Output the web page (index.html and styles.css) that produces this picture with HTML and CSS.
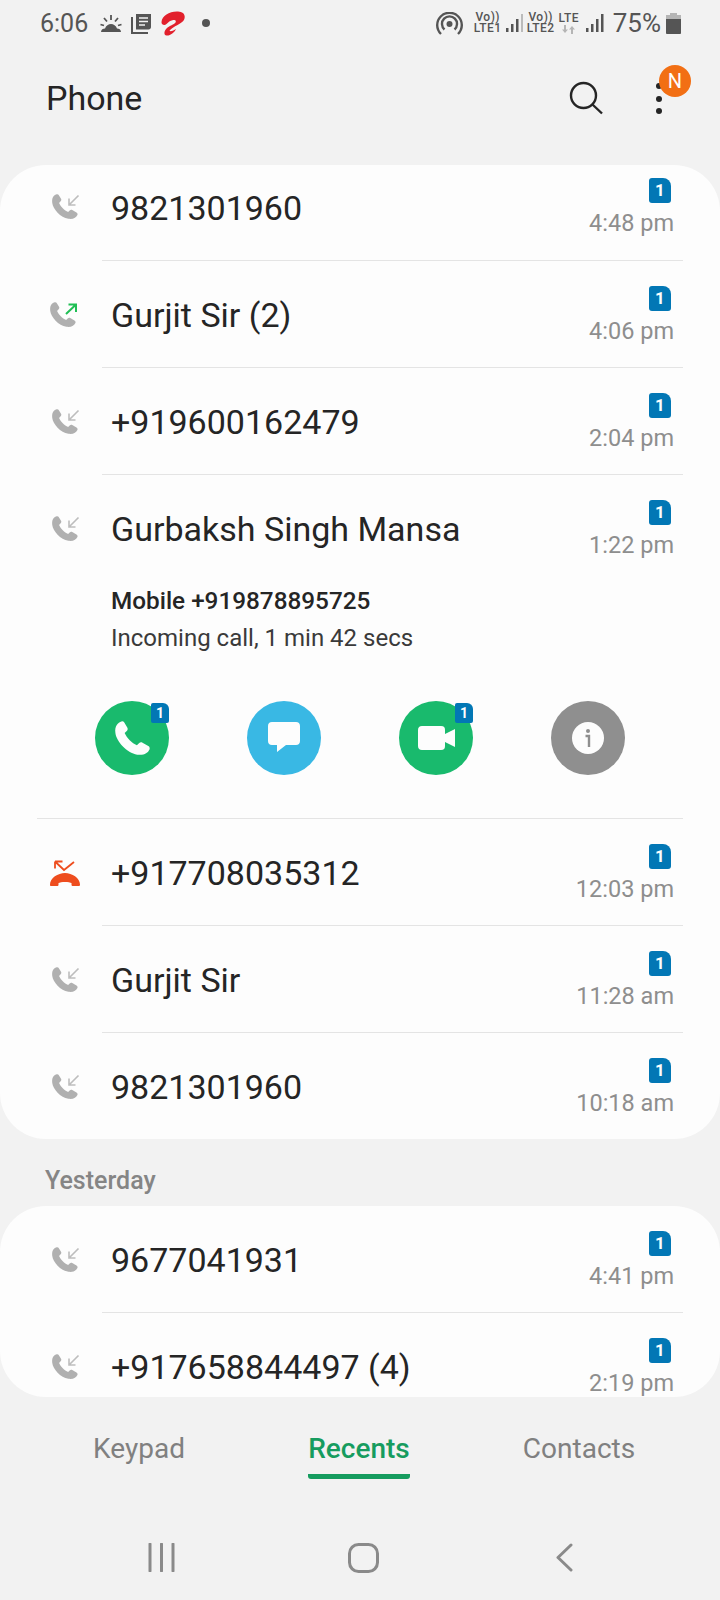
FILE: index.html
```html
<!DOCTYPE html>
<html lang="en">
<head>
  <meta charset="UTF-8" />
  <meta name="viewport" content="width=device-width, initial-scale=1.0"/>
  <title>Phone</title>
  <link rel="stylesheet" href="styles.css">
</head>
<body>
  <svg class="defs" width="0" height="0">
    <symbol id="handset" viewBox="0 0 24 24">
      <path d="M6 2.500C4 3 2 5 2.500 9C3 14 9 20.500 15 21.500C19 22 21 20.500 22 18.500C22.300 17.700 22 17 21.300 16.600L18 14.700C17.300 14.300 16.600 14.400 16 15L14.800 16.200C12 15 9 12 7.800 9.200L9 8C9.600 7.400 9.700 6.700 9.300 6L7.500 3C7.200 2.500 6.600 2.300 6 2.500Z"/>
    </symbol>
    <symbol id="call-in" viewBox="0 0 28 26">
      <use href="#handset" x="-3" y="-3" width="31" height="31" fill="#b0b0b0"/>
      <path d="M26.500 1.500L17 11M17 4.500V11H23.500" fill="none" stroke="#bdbdbd" stroke-width="1.600"/>
    </symbol>
    <symbol id="call-out" viewBox="0 0 28 26">
      <use href="#handset" x="-3" y="-3" width="31" height="31" fill="#b0b0b0"/>
      <path d="M16 12L26 2.500M18.500 2.500H26V10" fill="none" stroke="#20bf55" stroke-width="2"/>
    </symbol>
    <symbol id="call-missed" viewBox="0 0 30 26">
      <path d="M1 26H7C8 26 8.500 25.500 8.500 24.500V23C10.500 21.500 19.500 21.500 21.500 23V24.500C21.500 25.500 22 26 23 26H28.500C29.500 26 30 25.500 30 24.500C30 18 22 13 15 13C8 13 0 18 0 24.500C0 25.500 .3 26 1 26Z" fill="#ee4d1e"/>
      <path d="M5 1.500L14 10L24 2M5 1.500H12.500M5 1.500V8.500" fill="none" stroke="#ee4d1e" stroke-width="1.800"/>
    </symbol>
  </svg>

  <div class="phone">
    <div class="status-bar">
      <div class="status-left">
        <span class="clock">6:06</span>
        <svg class="st-weather" width="22" height="20" viewBox="0 0 22 20">
          <path d="M1 19C1 16.500 3 15.500 5 15.500C6 12.500 8.500 11 11 11C13.500 11 16 12.500 17 15.500C19 15.500 21 16.500 21 19Z" fill="#555"/>
          <path d="M11 2V7M4 5L7 8.500M18 5L15 8.500M0.500 11.500L4 12.500M21.500 11.500L18 12.500" stroke="#555" stroke-width="1.800" fill="none"/>
        </svg>
        <svg class="st-news" width="21" height="21" viewBox="0 0 21 21">
          <path d="M1 4V20H17" fill="none" stroke="#555" stroke-width="2"/>
          <path d="M5 1H20V14C20 15.500 19 16.500 17.500 16.500H5Z" fill="#555"/>
          <path d="M8 5H17M8 8.500H17M8 12H14" stroke="#f2f2f2" stroke-width="1.600"/>
        </svg>
        <svg class="st-airtel" width="24" height="25" viewBox="0 0 24 25">
          <path d="M.5 11C1 4.500 9 0 17 .5C22 .8 24.500 3.500 23.500 7.500C22.500 11.500 17 13.500 13 16C11 17.300 9 18.800 8.500 20C10.500 20.500 13 19.500 15 18C13.500 21.500 9 25 5.500 24.500C2.500 24 2.800 20 6 17C8.500 14.800 13 13.500 14.500 11.500C15.500 9.800 14 8.800 11.500 9.200C9 9.700 7.500 11 5.500 13C3.500 14.800 .3 13.800 .5 11Z" fill="#e2202c"/>
        </svg>
        <span class="st-dot"></span>
      </div>
      <div class="status-right">
        <svg class="st-hotspot" width="27" height="23" viewBox="0 0 27 23">
          <circle cx="13.500" cy="12" r="3" fill="#555"/>
          <path d="M8.500 17.500A7.500 7.500 0 1 1 18.500 17.500M5 22A12.300 12.300 0 1 1 22 22" fill="none" stroke="#555" stroke-width="2.400"/>
        </svg>
        <span class="volte"><span>Vo))</span><span>LTE1</span></span>
        <svg class="st-bars" width="18" height="20" viewBox="0 0 18 20">
          <path d="M1 15H3.500V19H1ZM6 11H8.500V19H6ZM11 6H13.500V19H11Z" fill="#555"/>
          <path d="M16 1H18V19H16Z" fill="#bbb"/>
        </svg>
        <span class="volte"><span>Vo))</span><span>LTE2</span></span>
        <span class="volte lte"><span>LTE</span>
          <svg width="15" height="9" viewBox="0 0 15 9"><path d="M1 4.500L4 8L7 4.500H5V0H3V4.500ZM8 4.500L11 1L14 4.500H12V9H10V4.500Z" fill="#b5b5b5"/></svg>
        </span>
        <svg class="st-bars" width="19" height="20" viewBox="0 0 19 20">
          <path d="M1 15H3.500V19H1ZM6 11H8.500V19H6ZM11 6H13.500V19H11ZM16 1H18.500V19H16Z" fill="#555"/>
        </svg>
        <span class="battery-pct">75%</span>
        <svg class="st-battery" width="15" height="21" viewBox="0 0 15 21">
          <path d="M4 0H11V2H15V6H0V2H4Z" fill="#b5b5b5"/>
          <path d="M0 6H15V20C15 20.500 14.500 21 14 21H1C.5 21 0 20.500 0 20Z" fill="#555"/>
        </svg>
      </div>
    </div>

    <header class="app-header">
      <h1>Phone</h1>
      <div class="header-actions">
        <svg width="34" height="34" viewBox="0 0 34 34">
          <circle cx="14.500" cy="14.500" r="12.500" fill="none" stroke="#252525" stroke-width="2.400"/>
          <path d="M23.500 23.500L33 32.500" stroke="#252525" stroke-width="2.400"/>
        </svg>
        <div class="more">
          <span></span><span></span><span></span>
          <b class="notif">N</b>
        </div>
      </div>
    </header>

    <section class="card">
      <div class="row first">
        <svg class="call-icon"><use href="#call-in"/></svg>
        <div class="row-body">
          <div class="name">9821301960</div>
          <div class="meta"><span class="sim">1</span><span class="time">4:48 pm</span></div>
        </div>
      </div>
      <div class="row">
        <svg class="call-icon out"><use href="#call-out"/></svg>
        <div class="row-body">
          <div class="name">Gurjit Sir (2)</div>
          <div class="meta"><span class="sim">1</span><span class="time">4:06 pm</span></div>
        </div>
      </div>
      <div class="row">
        <svg class="call-icon"><use href="#call-in"/></svg>
        <div class="row-body">
          <div class="name">+919600162479</div>
          <div class="meta"><span class="sim">1</span><span class="time">2:04 pm</span></div>
        </div>
      </div>
      <div class="row open">
        <svg class="call-icon"><use href="#call-in"/></svg>
        <div class="row-body">
          <div class="name">Gurbaksh Singh Mansa</div>
          <div class="meta"><span class="sim">1</span><span class="time">1:22 pm</span></div>
        </div>
      </div>
      <div class="details">
        <div class="detail-number">Mobile +919878895725</div>
        <div class="detail-info">Incoming call, 1 min 42 secs</div>
        <div class="actions">
          <div class="action green">
            <svg width="42" height="42" viewBox="0 0 24 24" fill="#fdfdfd"><use href="#handset"/></svg>
            <span class="sim small">1</span>
          </div>
          <div class="action blue">
            <svg width="36" height="36" viewBox="0 0 36 36">
              <path d="M6 2H30C32.500 2 34 3.500 34 6V21C34 23.500 32.500 25 30 25H20L11 32V25H6C3.500 25 2 23.500 2 21V6C2 3.500 3.500 2 6 2Z" fill="#fdfdfd"/>
            </svg>
          </div>
          <div class="action green">
            <svg width="37" height="24" viewBox="0 0 37 24">
              <path d="M4 0H23C26 0 27 1.500 27 4V8L37 3V21L27 16V20C27 22.500 26 24 23 24H4C1.500 24 0 22.500 0 20V4C0 1.500 1.500 0 4 0Z" fill="#fdfdfd"/>
            </svg>
            <span class="sim small">1</span>
          </div>
          <div class="action gray">
            <svg width="32" height="32" viewBox="0 0 32 32">
              <circle cx="16" cy="16" r="16" fill="#fdfdfd"/>
              <circle cx="16" cy="9" r="2" fill="#8f8f8f"/>
              <path d="M13.500 14H17V25" fill="none" stroke="#8f8f8f" stroke-width="2.400"/>
            </svg>
          </div>
        </div>
      </div>
      <div class="row">
        <svg class="call-icon missed"><use href="#call-missed"/></svg>
        <div class="row-body">
          <div class="name">+917708035312</div>
          <div class="meta"><span class="sim">1</span><span class="time">12:03 pm</span></div>
        </div>
      </div>
      <div class="row">
        <svg class="call-icon"><use href="#call-in"/></svg>
        <div class="row-body">
          <div class="name">Gurjit Sir</div>
          <div class="meta"><span class="sim">1</span><span class="time">11:28 am</span></div>
        </div>
      </div>
      <div class="row last">
        <svg class="call-icon"><use href="#call-in"/></svg>
        <div class="row-body">
          <div class="name">9821301960</div>
          <div class="meta"><span class="sim">1</span><span class="time">10:18 am</span></div>
        </div>
      </div>
    </section>

    <div class="day-label">Yesterday</div>

    <section class="card clipped">
      <div class="row">
        <svg class="call-icon"><use href="#call-in"/></svg>
        <div class="row-body">
          <div class="name">9677041931</div>
          <div class="meta"><span class="sim">1</span><span class="time">4:41 pm</span></div>
        </div>
      </div>
      <div class="row">
        <svg class="call-icon"><use href="#call-in"/></svg>
        <div class="row-body">
          <div class="name">+917658844497 (4)</div>
          <div class="meta"><span class="sim">1</span><span class="time">2:19 pm</span></div>
        </div>
      </div>
    </section>

    <nav class="tabs">
      <div class="tab">Keypad</div>
      <div class="tab active">Recents</div>
      <div class="tab">Contacts</div>
    </nav>

    <div class="nav-bar">
      <svg width="27" height="29" viewBox="0 0 27 29"><path d="M2 1V28M13.500 1V28M25 1V28" stroke="#8a8a8a" stroke-width="3" stroke-linecap="round"/></svg>
      <svg class="nav-home" width="31" height="30" viewBox="0 0 31 30"><rect x="1.500" y="1.500" width="28" height="27" rx="9" fill="none" stroke="#8a8a8a" stroke-width="3"/></svg>
      <svg width="18" height="29" viewBox="0 0 18 29"><path d="M16 2L3 14.500L16 27" fill="none" stroke="#8a8a8a" stroke-width="3" stroke-linecap="round" stroke-linejoin="round"/></svg>
    </div>
  </div>
</body>
</html>
```

FILE: styles.css
```css
* {
  box-sizing: border-box;
}

body {
  margin: 0;
  padding: 0;
  background: #f2f2f2;
  font-family: Roboto, "Noto Sans", sans-serif;
  color: #252525;
}

.defs {
  display: block;
  height: 0;
}

.phone {
  width: 720px;
  height: 1600px;
  display: flex;
  flex-direction: column;
  overflow: hidden;
}

/* status bar */
.status-bar {
  height: 46px;
  padding: 0 39px 0 40px;
  display: flex;
  justify-content: space-between;
  align-items: center;
  color: #555;
}

.status-left,
.status-right {
  display: flex;
  align-items: center;
}

.clock {
  font-size: 25px;
  margin-right: 12px;
}

.st-news {
  margin-left: 9px;
}

.st-airtel {
  margin-left: 9px;
}

.st-dot {
  width: 8px;
  height: 8px;
  border-radius: 50%;
  background: #555;
  margin-left: 17px;
}

.volte {
  display: flex;
  flex-direction: column;
  align-items: center;
  font-size: 12px;
  letter-spacing: .5px;
  line-height: 11px;
  font-weight: 500;
  margin-left: 5px;
  width: 26px;
}

.st-hotspot {
  margin-right: 7px;
}

.lte {
  width: 20px;
  margin-left: 5px;
}

.lte svg {
  margin-top: 1px;
}

.st-bars {
  margin-left: 4px;
}

.status-right .lte + .st-bars {
  margin-left: 6px;
}

.battery-pct {
  font-size: 26px;
  margin-left: 9px;
}

.st-battery {
  margin-left: 5px;
}

/* app header */
.app-header {
  height: 119px;
  padding: 31px 58px 0 46px;
  display: flex;
  justify-content: space-between;
  align-items: flex-start;
}

.app-header h1 {
  margin: 0;
  font-size: 34px;
  line-height: 42px;
  font-weight: 400;
}

.header-actions {
  display: flex;
  gap: 53px;
  padding-top: 4px;
}

.more {
  position: relative;
  width: 6px;
  display: flex;
  flex-direction: column;
  gap: 6.500px;
  padding-top: 2px;
}

.more span {
  width: 6px;
  height: 6px;
  border-radius: 50%;
  background: #252525;
}

.notif {
  position: absolute;
  top: -16px;
  left: 3px;
  width: 32px;
  height: 32px;
  border-radius: 50%;
  background: #f26f14;
  color: #fdfdfd;
  font-size: 20px;
  font-weight: 400;
  line-height: 32px;
  text-align: center;
}

/* call list */
.card {
  background: #fdfdfd;
  border-radius: 46px;
}

.card.clipped {
  height: 191px;
  overflow: hidden;
}

.row {
  height: 107px;
  display: flex;
  padding-left: 50px;
}

.row.first {
  height: 96px;
}

.row.last {
  height: 106px;
}

.call-icon {
  width: 28px;
  height: 26px;
  margin-top: 41px;
  margin-left: 2px;
  margin-right: 22px;
  flex: none;
}

.row.first .call-icon {
  margin-top: 29px;
}

.call-icon.out {
  margin-left: 0;
  margin-right: 24px;
}

.call-icon.missed {
  width: 30px;
  margin-left: 0;
  margin-right: 22px;
}

.row-body {
  flex: 1;
  margin-right: 37px;
  padding: 0 9px;
  display: flex;
  justify-content: space-between;
  align-items: flex-start;
  border-bottom: 1px solid #e4e4e4;
}

.row.open .row-body,
.row.last .row-body {
  border-bottom: none;
}

.name {
  font-size: 34px;
  line-height: 40px;
  padding-top: 34px;
}

.row.first .name {
  padding-top: 23px;
}

.meta {
  display: flex;
  flex-direction: column;
  align-items: flex-end;
  padding-top: 25px;
}

.row.first .meta {
  padding-top: 13px;
}

.sim {
  width: 22px;
  height: 25px;
  margin-right: 3px;
  border-radius: 3px 8px 3px 3px;
  background: #0277b5;
  color: #fdfdfd;
  font-size: 17px;
  font-weight: 700;
  line-height: 25px;
  text-align: center;
}

.time {
  margin-top: 6px;
  font-size: 23.500px;
  line-height: 28px;
  color: #8e8e8e;
}

.details {
  margin: 0 37px;
  padding-bottom: 43px;
  border-bottom: 1px solid #e4e4e4;
}

.detail-number {
  padding-left: 74px;
  font-size: 24.300px;
  font-weight: 500;
  line-height: 37px;
}

.detail-info {
  padding-left: 74px;
  font-size: 24px;
  line-height: 38px;
  color: #3a3a3a;
}

.actions {
  margin-top: 44px;
  padding-left: 58px;
  display: flex;
  gap: 78px;
}

.action {
  position: relative;
  width: 74px;
  height: 74px;
  border-radius: 50%;
  display: flex;
  justify-content: center;
  align-items: center;
}

.action.green {
  background: #19ba6d;
}

.action.blue {
  background: #39b8e4;
}

.action.gray {
  background: #8f8f8f;
}

.sim.small {
  position: absolute;
  top: 2px;
  right: 0;
  width: 18px;
  height: 20px;
  margin: 0;
  border-radius: 2px 6px 2px 2px;
  font-size: 14px;
  line-height: 20px;
}

.day-label {
  height: 67px;
  padding: 25px 0 0 45px;
  font-size: 25px;
  font-weight: 500;
  line-height: 34px;
  color: #858585;
}

/* tabs */
.tabs {
  height: 83px;
  padding: 34px 31px 0 29px;
  display: grid;
  grid-template-columns: repeat(3, 1fr);
  justify-items: center;
  align-items: start;
}

.tab {
  font-size: 28px;
  line-height: 36px;
  color: #808080;
}

.tab.active {
  color: #169c5f;
  font-weight: 500;
  padding-bottom: 7px;
  border-bottom: 5px solid #169c5f;
  border-radius: 0 0 3px 3px;
}

/* navigation bar */
.nav-bar {
  flex: 1;
  padding: 63px 147px 0 148px;
  display: flex;
  justify-content: space-between;
  align-items: flex-start;
}

.nav-home {
  margin-left: -4px;
}
```
